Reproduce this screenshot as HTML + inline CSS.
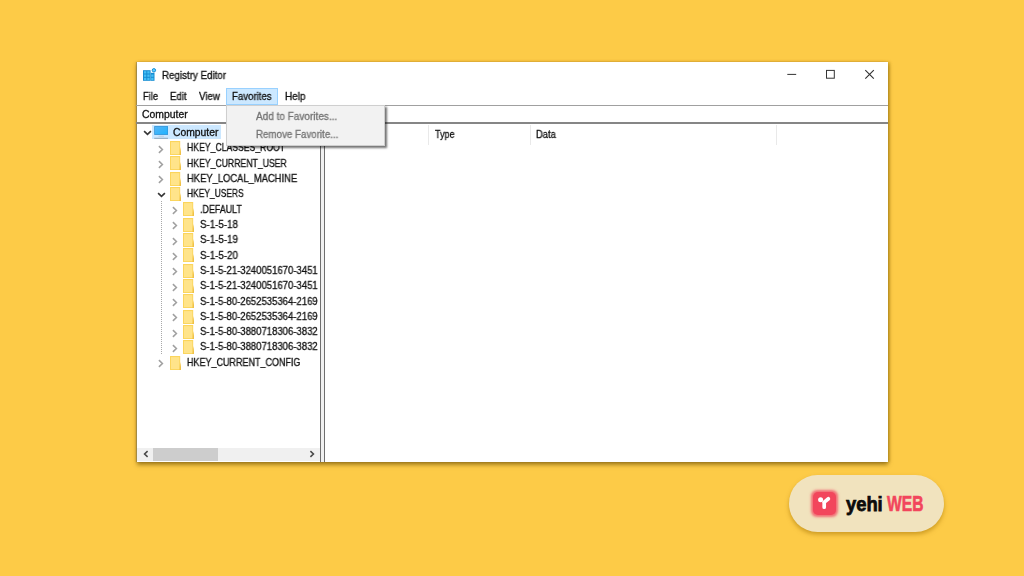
<!DOCTYPE html>
<html lang="en"><head><meta charset="utf-8"><title>Registry Editor</title>
<style>
html,body{margin:0;padding:0}
body{width:1024px;height:576px;overflow:hidden;background:#fdcb47;position:relative;font-family:"Liberation Sans", sans-serif;font-size:10.2px}
.win{position:absolute;left:137.4px;top:62.2px;width:750.4px;height:399.9px;background:#fff;box-shadow:-1px 0 .8px rgba(120,115,85,.5), 0 3px 4px rgba(100,75,0,.55), 1.5px 0 2.5px rgba(150,110,0,.38), -2.5px 0 3px rgba(200,130,0,.22)}
.abs,.t,.ic,.sel,.ln{position:absolute}
.t{will-change:transform;-webkit-text-stroke:.3px currentColor;white-space:pre;transform-origin:0 50%;font-family:"Liberation Sans", sans-serif;font-size:10.2px}
.sel{background:#cce8ff}
.ln{background:#888}
.tree{position:absolute;left:0;top:0;width:319.5px;height:576px;overflow:hidden}
</style></head><body>
<div class="win"></div>

<!-- title bar -->
<svg class="ic" style="left:143px;top:68px" width="14" height="13" viewBox="0 0 14 13">
 <rect x="0" y="2.2" width="7.6" height="10.6" fill="#158cd2"/>
 <rect x="7.6" y="4.8" width="3.9" height="8" fill="#158cd2"/>
 <g fill="#45c0f5"><rect x="1" y="3.2" width="2.3" height="2.3"/><rect x="4.3" y="3.2" width="2.3" height="2.3"/>
 <rect x="1" y="6.5" width="2.3" height="2.3"/><rect x="4.3" y="6.5" width="2.3" height="2.3"/><rect x="8.2" y="6.5" width="2.3" height="2.3"/>
 <rect x="1" y="9.8" width="2.3" height="2.3"/><rect x="4.3" y="9.8" width="2.3" height="2.3"/><rect x="8.2" y="9.8" width="2.3" height="2.3"/></g>
 <circle cx="10.9" cy="2.3" r="1.7" fill="#5fd0ff" stroke="#158cd2" stroke-width="1"/>
</svg>
<span class="t" style="left:161.70px;top:68.87px;line-height:14px;transform:scaleX(0.9579);color:#111;">Registry Editor</span>
<svg class="ic" style="left:786px;top:69px" width="90" height="11" viewBox="0 0 90 11">
 <path d="M1.3 5.4H10.2" stroke="#333" stroke-width="1" fill="none"/>
 <rect x="40.5" y="1.4" width="7.8" height="7.8" stroke="#333" stroke-width="1" fill="none"/>
 <path d="M79.3 1.2L87.8 9.6M87.8 1.2L79.3 9.6" stroke="#333" stroke-width="1.15" fill="none"/>
</svg>

<!-- menu bar -->
<div class="abs" style="left:226px;top:88px;width:52px;height:16.5px;background:#cce8ff;box-shadow:inset 0 0 0 1px #99d1ff"></div>
<span class="t" style="left:142.70px;top:89.87px;line-height:14px;transform:scaleX(0.9195);color:#111;">File</span>
<span class="t" style="left:170.00px;top:89.87px;line-height:14px;transform:scaleX(0.9452);color:#111;">Edit</span>
<span class="t" style="left:198.80px;top:89.87px;line-height:14px;transform:scaleX(0.9586);color:#111;">View</span>
<span class="t" style="left:232.20px;top:89.87px;line-height:14px;transform:scaleX(0.9450);color:#111;">Favorites</span>
<span class="t" style="left:284.50px;top:89.87px;line-height:14px;transform:scaleX(0.9784);color:#111;">Help</span>
<div class="ln" style="left:136px;top:105px;width:752px;height:1px;background:#a0a0a0"></div>

<!-- address bar -->
<span class="t" style="left:141.80px;top:107.57px;line-height:14px;transform:scaleX(1.0216);color:#111;">Computer</span>
<div class="ln" style="left:136px;top:122px;width:752px;height:2px;background:#868686"></div>

<!-- tree -->
<div class="tree">
<div class="abs" style="left:160.5px;top:201px;width:0;height:153px;border-left:1px dotted #a8a8a8"></div>
<div class="sel" style="left:152.2px;top:124.65px;width:69.3px;height:14.3px"></div>
<svg class="ic" style="left:142.80px;top:130.05px" width="9" height="6" viewBox="0 0 9 6"><path d="M1.1 1.1 L4.5 4.4 L7.9 1.1" fill="none" stroke="#363636" stroke-width="1.6"/></svg>
<svg class="ic" style="left:153.7px;top:125.85px" width="14.4" height="13" viewBox="0 0 14.4 13"><defs><linearGradient id="mg" x1="0" y1="0" x2="1" y2="1"><stop offset="0" stop-color="#56b4f5"/><stop offset="1" stop-color="#1fb4ff"/></linearGradient></defs><rect x="0.2" y="0.1" width="14" height="8.8" fill="#2f93d8"/><rect x="1" y="0.9" width="12.4" height="7.2" fill="url(#mg)"/><rect x="4.5" y="9.8" width="5.4" height="0.8" fill="#b9c6d2"/><rect x="0.2" y="11.8" width="14" height="1" fill="#8ea4ba"/></svg>
<span class="t" style="left:172.70px;top:125.87px;line-height:14px;transform:scaleX(1.0149);color:#111;">Computer</span>
<svg class="ic" style="left:158.40px;top:144.58px" width="6" height="9" viewBox="0 0 6 9"><path d="M0.9 1.1 L4.4 4.5 L0.9 7.9" fill="none" stroke="#a0a0a0" stroke-width="1.55"/></svg>
<svg class="ic" style="left:169.70px;top:140.88px" width="11.4" height="14.2" viewBox="0 0 11.4 14.2"><path d="M0 0H10.2V7.5L11.4 14.2H0Z" fill="#fbd55c"/><path d="M10.2 6 L11.4 14.2 H9.3 Z" fill="#efc148"/><rect x="1" y="1.1" width="8.3" height="12" fill="#ffe48a"/></svg>
<span class="t" style="left:186.90px;top:141.20px;line-height:14px;transform:scaleX(0.8494);color:#111;">HKEY_CLASSES_ROOT</span>
<svg class="ic" style="left:158.40px;top:159.91px" width="6" height="9" viewBox="0 0 6 9"><path d="M0.9 1.1 L4.4 4.5 L0.9 7.9" fill="none" stroke="#a0a0a0" stroke-width="1.55"/></svg>
<svg class="ic" style="left:169.70px;top:156.21px" width="11.4" height="14.2" viewBox="0 0 11.4 14.2"><path d="M0 0H10.2V7.5L11.4 14.2H0Z" fill="#fbd55c"/><path d="M10.2 6 L11.4 14.2 H9.3 Z" fill="#efc148"/><rect x="1" y="1.1" width="8.3" height="12" fill="#ffe48a"/></svg>
<span class="t" style="left:186.90px;top:156.53px;line-height:14px;transform:scaleX(0.8508);color:#111;">HKEY_CURRENT_USER</span>
<svg class="ic" style="left:158.40px;top:175.24px" width="6" height="9" viewBox="0 0 6 9"><path d="M0.9 1.1 L4.4 4.5 L0.9 7.9" fill="none" stroke="#a0a0a0" stroke-width="1.55"/></svg>
<svg class="ic" style="left:169.70px;top:171.54px" width="11.4" height="14.2" viewBox="0 0 11.4 14.2"><path d="M0 0H10.2V7.5L11.4 14.2H0Z" fill="#fbd55c"/><path d="M10.2 6 L11.4 14.2 H9.3 Z" fill="#efc148"/><rect x="1" y="1.1" width="8.3" height="12" fill="#ffe48a"/></svg>
<span class="t" style="left:186.90px;top:171.86px;line-height:14px;transform:scaleX(0.9224);color:#111;">HKEY_LOCAL_MACHINE</span>
<svg class="ic" style="left:156.80px;top:192.17px" width="9" height="6" viewBox="0 0 9 6"><path d="M1.1 1.1 L4.5 4.4 L7.9 1.1" fill="none" stroke="#363636" stroke-width="1.6"/></svg>
<svg class="ic" style="left:169.70px;top:186.87px" width="11.4" height="14.2" viewBox="0 0 11.4 14.2"><path d="M0 0H10.2V7.5L11.4 14.2H0Z" fill="#fbd55c"/><path d="M10.2 6 L11.4 14.2 H9.3 Z" fill="#efc148"/><rect x="1" y="1.1" width="8.3" height="12" fill="#ffe48a"/></svg>
<span class="t" style="left:186.90px;top:187.19px;line-height:14px;transform:scaleX(0.8275);color:#111;">HKEY_USERS</span>
<svg class="ic" style="left:172.20px;top:205.90px" width="6" height="9" viewBox="0 0 6 9"><path d="M0.9 1.1 L4.4 4.5 L0.9 7.9" fill="none" stroke="#a0a0a0" stroke-width="1.55"/></svg>
<svg class="ic" style="left:183.10px;top:202.20px" width="11.4" height="14.2" viewBox="0 0 11.4 14.2"><path d="M0 0H10.2V7.5L11.4 14.2H0Z" fill="#fbd55c"/><path d="M10.2 6 L11.4 14.2 H9.3 Z" fill="#efc148"/><rect x="1" y="1.1" width="8.3" height="12" fill="#ffe48a"/></svg>
<span class="t" style="left:200.10px;top:202.52px;line-height:14px;transform:scaleX(0.8720);color:#111;">.DEFAULT</span>
<svg class="ic" style="left:172.20px;top:221.23px" width="6" height="9" viewBox="0 0 6 9"><path d="M0.9 1.1 L4.4 4.5 L0.9 7.9" fill="none" stroke="#a0a0a0" stroke-width="1.55"/></svg>
<svg class="ic" style="left:183.10px;top:217.53px" width="11.4" height="14.2" viewBox="0 0 11.4 14.2"><path d="M0 0H10.2V7.5L11.4 14.2H0Z" fill="#fbd55c"/><path d="M10.2 6 L11.4 14.2 H9.3 Z" fill="#efc148"/><rect x="1" y="1.1" width="8.3" height="12" fill="#ffe48a"/></svg>
<span class="t" style="left:200.10px;top:217.85px;line-height:14px;transform:scaleX(0.9561);color:#111;">S-1-5-18</span>
<svg class="ic" style="left:172.20px;top:236.56px" width="6" height="9" viewBox="0 0 6 9"><path d="M0.9 1.1 L4.4 4.5 L0.9 7.9" fill="none" stroke="#a0a0a0" stroke-width="1.55"/></svg>
<svg class="ic" style="left:183.10px;top:232.86px" width="11.4" height="14.2" viewBox="0 0 11.4 14.2"><path d="M0 0H10.2V7.5L11.4 14.2H0Z" fill="#fbd55c"/><path d="M10.2 6 L11.4 14.2 H9.3 Z" fill="#efc148"/><rect x="1" y="1.1" width="8.3" height="12" fill="#ffe48a"/></svg>
<span class="t" style="left:200.10px;top:233.18px;line-height:14px;transform:scaleX(0.9561);color:#111;">S-1-5-19</span>
<svg class="ic" style="left:172.20px;top:251.89px" width="6" height="9" viewBox="0 0 6 9"><path d="M0.9 1.1 L4.4 4.5 L0.9 7.9" fill="none" stroke="#a0a0a0" stroke-width="1.55"/></svg>
<svg class="ic" style="left:183.10px;top:248.19px" width="11.4" height="14.2" viewBox="0 0 11.4 14.2"><path d="M0 0H10.2V7.5L11.4 14.2H0Z" fill="#fbd55c"/><path d="M10.2 6 L11.4 14.2 H9.3 Z" fill="#efc148"/><rect x="1" y="1.1" width="8.3" height="12" fill="#ffe48a"/></svg>
<span class="t" style="left:200.10px;top:248.51px;line-height:14px;transform:scaleX(0.9561);color:#111;">S-1-5-20</span>
<svg class="ic" style="left:172.20px;top:267.22px" width="6" height="9" viewBox="0 0 6 9"><path d="M0.9 1.1 L4.4 4.5 L0.9 7.9" fill="none" stroke="#a0a0a0" stroke-width="1.55"/></svg>
<svg class="ic" style="left:183.10px;top:263.52px" width="11.4" height="14.2" viewBox="0 0 11.4 14.2"><path d="M0 0H10.2V7.5L11.4 14.2H0Z" fill="#fbd55c"/><path d="M10.2 6 L11.4 14.2 H9.3 Z" fill="#efc148"/><rect x="1" y="1.1" width="8.3" height="12" fill="#ffe48a"/></svg>
<span class="t" style="left:200.10px;top:263.84px;line-height:14px;transform:scaleX(0.9360);color:#111;">S-1-5-21-3240051670-3451</span>
<svg class="ic" style="left:172.20px;top:282.55px" width="6" height="9" viewBox="0 0 6 9"><path d="M0.9 1.1 L4.4 4.5 L0.9 7.9" fill="none" stroke="#a0a0a0" stroke-width="1.55"/></svg>
<svg class="ic" style="left:183.10px;top:278.85px" width="11.4" height="14.2" viewBox="0 0 11.4 14.2"><path d="M0 0H10.2V7.5L11.4 14.2H0Z" fill="#fbd55c"/><path d="M10.2 6 L11.4 14.2 H9.3 Z" fill="#efc148"/><rect x="1" y="1.1" width="8.3" height="12" fill="#ffe48a"/></svg>
<span class="t" style="left:200.10px;top:279.17px;line-height:14px;transform:scaleX(0.9360);color:#111;">S-1-5-21-3240051670-3451</span>
<svg class="ic" style="left:172.20px;top:297.88px" width="6" height="9" viewBox="0 0 6 9"><path d="M0.9 1.1 L4.4 4.5 L0.9 7.9" fill="none" stroke="#a0a0a0" stroke-width="1.55"/></svg>
<svg class="ic" style="left:183.10px;top:294.18px" width="11.4" height="14.2" viewBox="0 0 11.4 14.2"><path d="M0 0H10.2V7.5L11.4 14.2H0Z" fill="#fbd55c"/><path d="M10.2 6 L11.4 14.2 H9.3 Z" fill="#efc148"/><rect x="1" y="1.1" width="8.3" height="12" fill="#ffe48a"/></svg>
<span class="t" style="left:200.10px;top:294.50px;line-height:14px;transform:scaleX(0.9360);color:#111;">S-1-5-80-2652535364-2169</span>
<svg class="ic" style="left:172.20px;top:313.21px" width="6" height="9" viewBox="0 0 6 9"><path d="M0.9 1.1 L4.4 4.5 L0.9 7.9" fill="none" stroke="#a0a0a0" stroke-width="1.55"/></svg>
<svg class="ic" style="left:183.10px;top:309.51px" width="11.4" height="14.2" viewBox="0 0 11.4 14.2"><path d="M0 0H10.2V7.5L11.4 14.2H0Z" fill="#fbd55c"/><path d="M10.2 6 L11.4 14.2 H9.3 Z" fill="#efc148"/><rect x="1" y="1.1" width="8.3" height="12" fill="#ffe48a"/></svg>
<span class="t" style="left:200.10px;top:309.83px;line-height:14px;transform:scaleX(0.9360);color:#111;">S-1-5-80-2652535364-2169</span>
<svg class="ic" style="left:172.20px;top:328.54px" width="6" height="9" viewBox="0 0 6 9"><path d="M0.9 1.1 L4.4 4.5 L0.9 7.9" fill="none" stroke="#a0a0a0" stroke-width="1.55"/></svg>
<svg class="ic" style="left:183.10px;top:324.84px" width="11.4" height="14.2" viewBox="0 0 11.4 14.2"><path d="M0 0H10.2V7.5L11.4 14.2H0Z" fill="#fbd55c"/><path d="M10.2 6 L11.4 14.2 H9.3 Z" fill="#efc148"/><rect x="1" y="1.1" width="8.3" height="12" fill="#ffe48a"/></svg>
<span class="t" style="left:200.10px;top:325.16px;line-height:14px;transform:scaleX(0.9360);color:#111;">S-1-5-80-3880718306-3832</span>
<svg class="ic" style="left:172.20px;top:343.87px" width="6" height="9" viewBox="0 0 6 9"><path d="M0.9 1.1 L4.4 4.5 L0.9 7.9" fill="none" stroke="#a0a0a0" stroke-width="1.55"/></svg>
<svg class="ic" style="left:183.10px;top:340.17px" width="11.4" height="14.2" viewBox="0 0 11.4 14.2"><path d="M0 0H10.2V7.5L11.4 14.2H0Z" fill="#fbd55c"/><path d="M10.2 6 L11.4 14.2 H9.3 Z" fill="#efc148"/><rect x="1" y="1.1" width="8.3" height="12" fill="#ffe48a"/></svg>
<span class="t" style="left:200.10px;top:340.49px;line-height:14px;transform:scaleX(0.9360);color:#111;">S-1-5-80-3880718306-3832</span>
<svg class="ic" style="left:158.40px;top:359.20px" width="6" height="9" viewBox="0 0 6 9"><path d="M0.9 1.1 L4.4 4.5 L0.9 7.9" fill="none" stroke="#a0a0a0" stroke-width="1.55"/></svg>
<svg class="ic" style="left:169.70px;top:355.50px" width="11.4" height="14.2" viewBox="0 0 11.4 14.2"><path d="M0 0H10.2V7.5L11.4 14.2H0Z" fill="#fbd55c"/><path d="M10.2 6 L11.4 14.2 H9.3 Z" fill="#efc148"/><rect x="1" y="1.1" width="8.3" height="12" fill="#ffe48a"/></svg>
<span class="t" style="left:186.90px;top:355.82px;line-height:14px;transform:scaleX(0.8825);color:#111;">HKEY_CURRENT_CONFIG</span>
</div>
<!-- scrollbar -->
<div class="abs" style="left:137px;top:448px;width:183px;height:12.6px;background:#f0f0f0"></div>
<div class="abs" style="left:152.6px;top:448px;width:65.4px;height:12.6px;background:#cdcdcd"></div>
<svg class="ic" style="left:142.6px;top:450.4px" width="6" height="8" viewBox="0 0 6 8"><path d="M4.6 1.2L1.6 4L4.6 6.8" fill="none" stroke="#4a4a4a" stroke-width="1.6"/></svg>
<svg class="ic" style="left:309.4px;top:450.4px" width="6" height="8" viewBox="0 0 6 8"><path d="M1.4 1.2L4.4 4L1.4 6.8" fill="none" stroke="#4a4a4a" stroke-width="1.6"/></svg>

<!-- splitter -->
<div class="abs" style="left:320px;top:124px;width:5px;height:338px;background:#f0f0f0;border-left:1px solid #6e6e6e;border-right:1px solid #6e6e6e;box-sizing:border-box"></div>

<!-- list header -->
<span class="t" style="left:331.00px;top:128.37px;line-height:14px;transform:scaleX(0.9563);color:#111;">Name</span>
<span class="t" style="left:434.70px;top:128.37px;line-height:14px;transform:scaleX(0.8826);color:#111;">Type</span>
<span class="t" style="left:536.30px;top:128.37px;line-height:14px;transform:scaleX(0.9242);color:#111;">Data</span>
<div class="abs" style="left:428px;top:125px;width:1px;height:19.5px;background:#e9e9e9"></div>
<div class="abs" style="left:530px;top:125px;width:1px;height:19.5px;background:#e9e9e9"></div>
<div class="abs" style="left:776px;top:125px;width:1px;height:19.5px;background:#e9e9e9"></div>

<!-- dropdown menu -->
<div class="abs" style="left:226.4px;top:104.5px;width:158.6px;height:41.5px;background:#f2f2f2;box-shadow:inset 0 0 0 1px #cfcfcf, 1.5px 1.5px 2px rgba(0,0,0,.55)"></div>
<span class="t" style="left:256.10px;top:109.87px;line-height:14px;transform:scaleX(0.9822);color:#737373;">Add to Favorites...</span>
<span class="t" style="left:255.70px;top:127.97px;line-height:14px;transform:scaleX(0.9563);color:#737373;">Remove Favorite...</span>

<!-- badge -->
<div class="abs" style="left:789.2px;top:475.3px;width:155px;height:57px;border-radius:29px;background:#f1e3be;box-shadow:0 2.5px 4px rgba(160,110,0,.5)"></div>
<div class="abs" style="left:813.4px;top:491.8px;width:22.4px;height:23px;border-radius:5px;background:#f2465c;box-shadow:0 0 2.5px 1.2px rgba(242,70,92,.75)"></div>
<svg class="ic" style="left:813.2px;top:492px" width="23" height="22.5" viewBox="0 0 23 22.5"><circle cx="7.6" cy="7.8" r="2.5" fill="#fff"/><path d="M11 10.4L15.4 6.8M11.2 10V15.2" stroke="#fff" stroke-width="3.7" stroke-linecap="round" fill="none"/></svg>
<span class="abs" style="left:845.6px;top:491.2px;font:bold 20.4px/26px 'Liberation Sans',sans-serif;color:#0b0b0b;transform-origin:0 50%;transform:scaleX(.9);-webkit-text-stroke:.75px #0b0b0b;white-space:pre">yehi</span>
<span class="abs" style="left:886.8px;top:491.4px;font:bold 21.6px/26px 'Liberation Sans',sans-serif;color:#f2465c;transform-origin:0 50%;transform:scaleX(.725);-webkit-text-stroke:.6px #f2465c;white-space:pre">WEB</span>
</body></html>
